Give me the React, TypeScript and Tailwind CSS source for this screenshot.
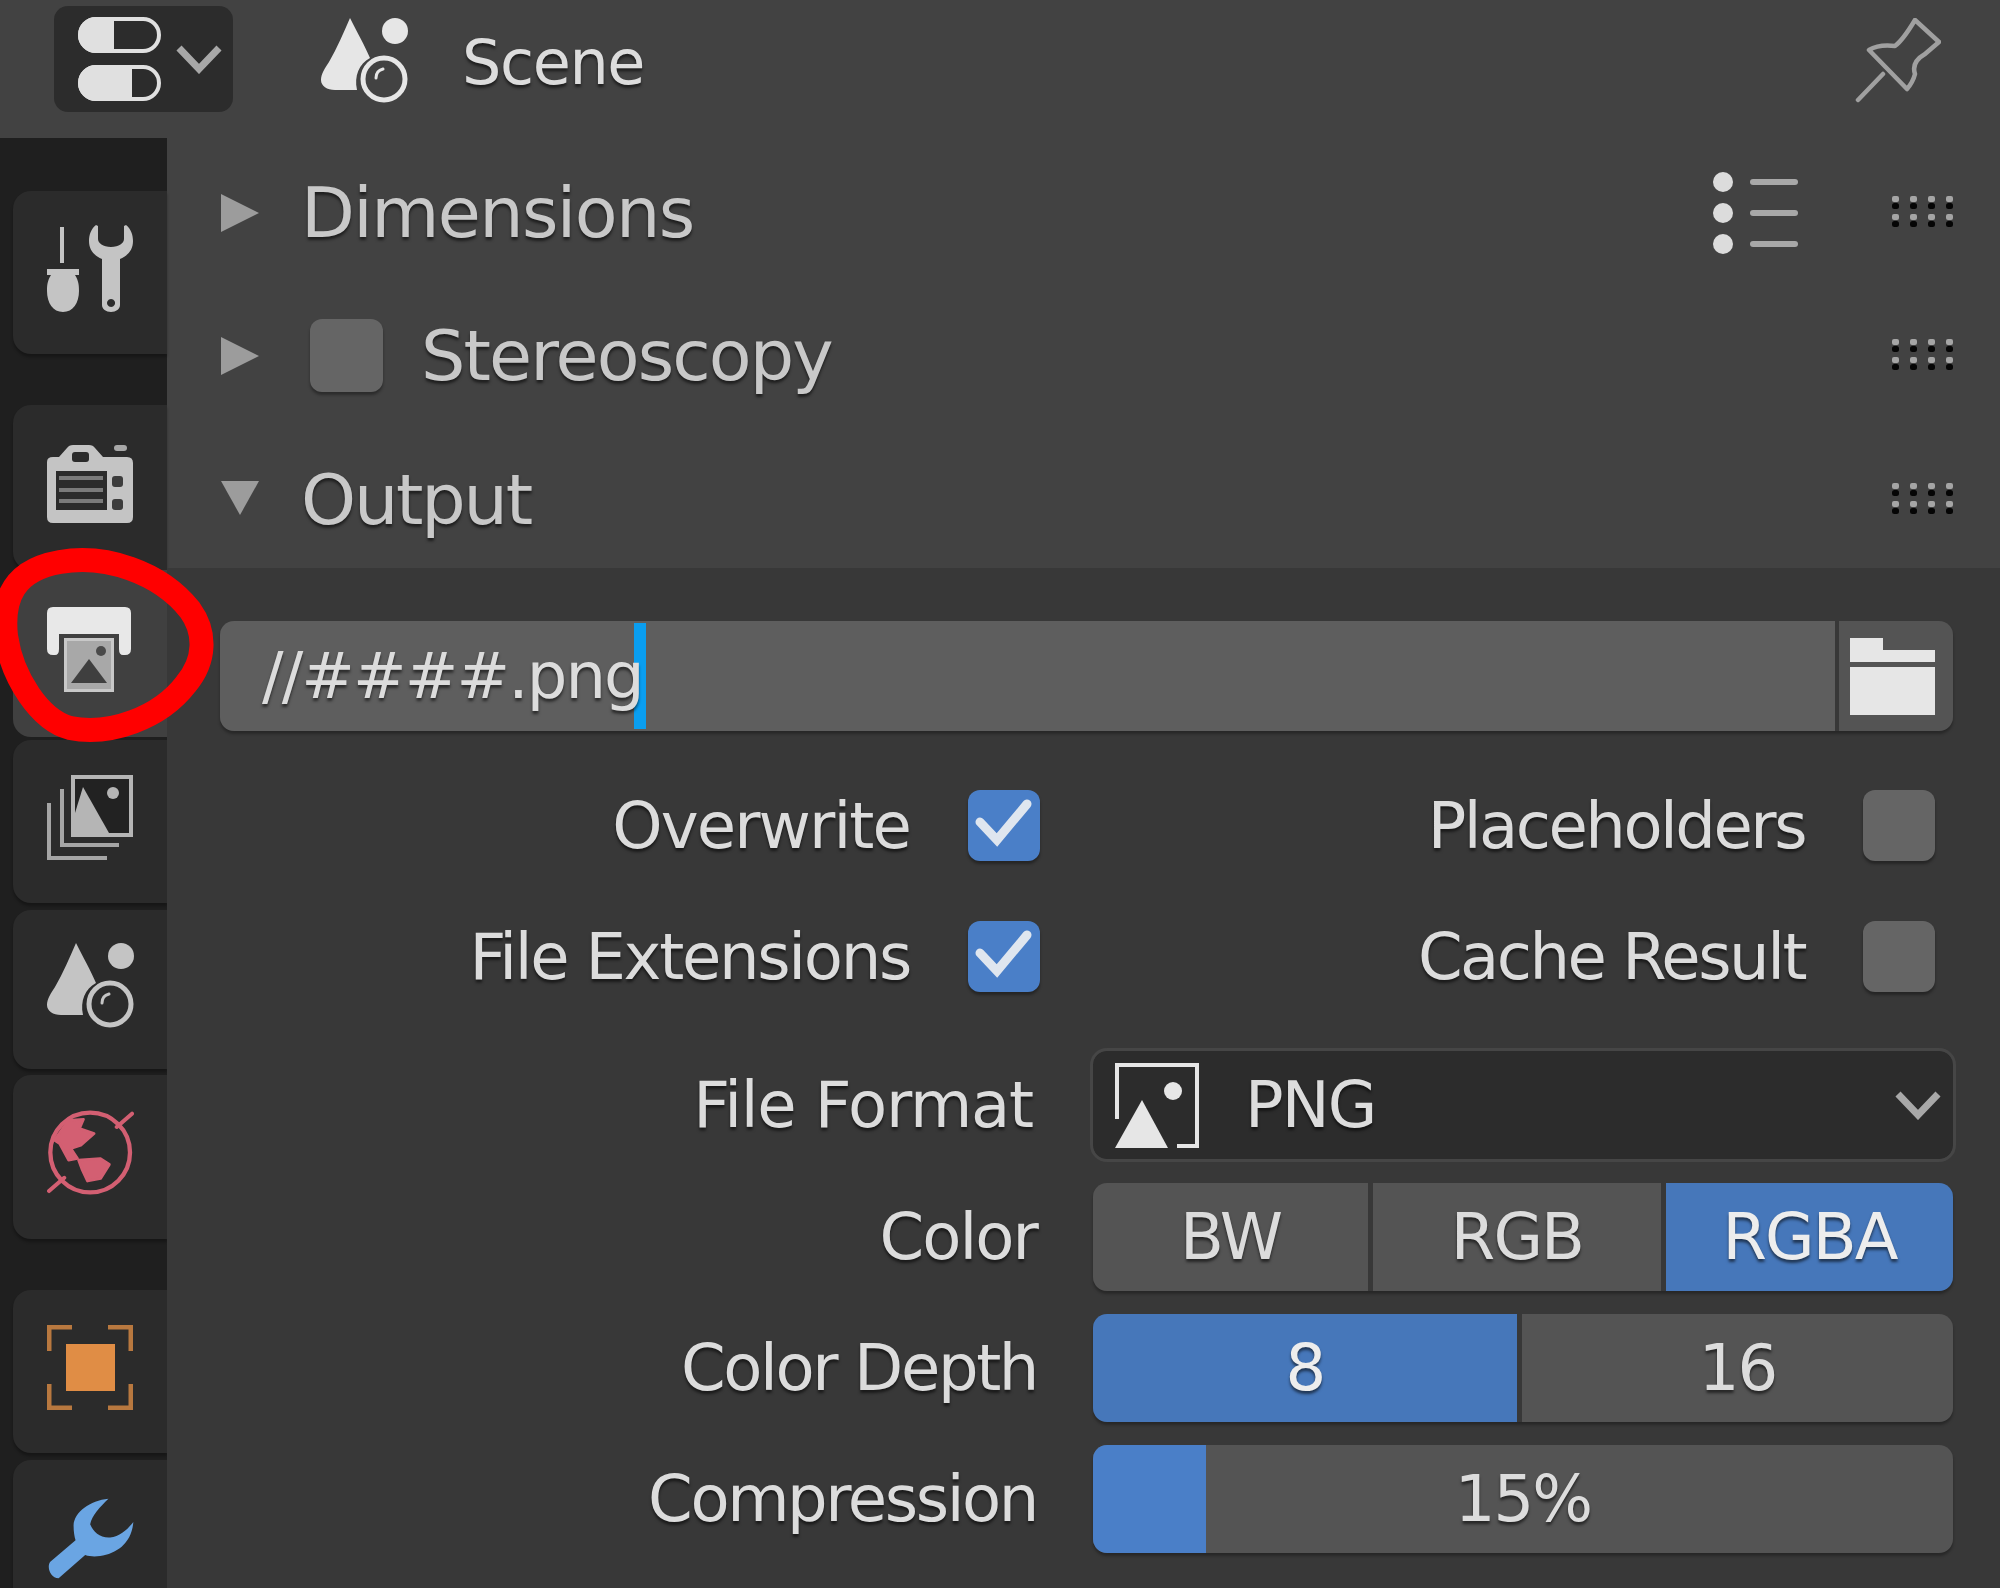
import type { ReactNode } from 'react';

const shadow = '[text-shadow:0_3px_3px_rgba(0,0,0,0.55)]';

function SceneIcon({ color, className }: { color: string; className: string }) {
    return (
        <svg viewBox="0 0 87 85" className={className} fill="none">
            <path d="M29 0 C36 14 44 28 49 40 C38 46 33 58 36 72 L14 72 C6 72 0 68 0 62 C0 56 4 50 8 44 C16 30 23 14 29 0 Z" fill={color} />
            <circle cx="74" cy="13" r="13" fill={color} />
            <circle cx="63" cy="61" r="21" stroke={color} strokeWidth="5" />
            <path d="M55 60 C55 55 58 52 62 51" stroke={color} strokeWidth="3" strokeLinecap="round" />
        </svg>
    );
}

function ToolIcon() {
    return (
        <svg viewBox="0 0 86 87" className="h-[87px] w-[86px]" fill="#c4c4c4">
            <rect x="13" y="2" width="4" height="36" />
            <path d="M0 44 H32 V50 H28 C32 56 32 62 32 66 C32 78 26 87 16 87 C6 87 0 78 0 66 C0 62 0 56 4 50 H0 Z" />
            <path fillRule="evenodd" d="M49 0 C44 4 42 10 42 16 C42 24 46 30 55 34 V80 C55 84 59 87 64 87 C69 87 73 84 73 80 V34 C82 30 86 24 86 16 C86 10 84 4 79 0 L77 1 V14 C77 18 72 22 64 22 C56 22 51 18 51 14 V1 Z M64 74 A4 4 0 1 0 64.1 74 Z" />
        </svg>
    );
}

function CameraIcon() {
    return (
        <svg viewBox="0 0 86 78" className="h-[78px] w-[86px]">
            <path fill="#c4c4c4" d="M0 17 Q0 12 6 12 H12 L20 3 Q22 0 26 0 H42 Q46 0 48 3 L56 12 H80 Q86 12 86 18 V72 Q86 78 80 78 H6 Q0 78 0 72 Z" />
            <rect x="25" y="7" width="17" height="10" rx="3" fill="#2b2b2b" />
            <rect x="9" y="26" width="51" height="39" fill="#2b2b2b" />
            <rect x="12" y="31" width="44" height="4" fill="#7a7a7a" />
            <rect x="12" y="43" width="44" height="4" fill="#7a7a7a" />
            <rect x="12" y="54" width="44" height="4" fill="#7a7a7a" />
            <rect x="65" y="31" width="11" height="11" rx="3" fill="#3c3c3c" />
            <rect x="65" y="54" width="11" height="11" rx="3" fill="#3c3c3c" />
            <rect x="67" y="0" width="13" height="6" rx="3" fill="#a8a8a8" />
        </svg>
    );
}

function RenderIcon() {
    return (
        <svg viewBox="0 0 84 85" className="h-[85px] w-[84px]">
            <path d="M6 0 H78 Q84 0 84 6 V42 Q84 48 78 48 H76 Q72 48 72 42 V27 H12 V42 Q12 48 8 48 H6 Q0 48 0 42 V6 Q0 0 6 0 Z" fill="#e8e8e8" />
            <rect x="17" y="31" width="50" height="54" fill="#c8c8c8" />
            <rect x="20" y="34" width="44" height="48" fill="#a8a8a8" />
            <path d="M24 76 L42 52 L60 76 Z" fill="#3f3f3f" />
            <circle cx="54" cy="44" r="5" fill="#4a4a4a" />
        </svg>
    );
}

function OutputIcon() {
    return (
        <svg viewBox="0 0 86 85" className="h-[85px] w-[86px]" fill="none">
            <rect x="26" y="2" width="58" height="58" fill="#222222" stroke="#b5b5b5" strokeWidth="4" />
            <path d="M28 38 L36 12 L62 58 H28 Z" fill="#b5b5b5" />
            <circle cx="66" cy="18" r="6" fill="#b5b5b5" />
            <path d="M15 14 V70 H72" stroke="#a5a5a5" strokeWidth="4" />
            <path d="M2 28 V83 H60" stroke="#a5a5a5" strokeWidth="4" />
        </svg>
    );
}

function WorldIcon() {
    return (
        <svg viewBox="140 200 262 250" className="h-[87px] w-[87px]" fill="none">
            <circle cx="270" cy="322" r="120" stroke="#d35f72" strokeWidth="13" />
            <path d="M350 245 L396 205 M146 438 L192 398" stroke="#d35f72" strokeWidth="12" strokeLinecap="round" />
            <path d="M205 225 L250 222 L238 250 L282 265 L242 300 L212 310 L232 340 L205 345 L178 295 L162 285 Z" fill="#d35f72" stroke="#d35f72" strokeWidth="8" strokeLinejoin="round" />
            <path d="M235 345 L300 340 L328 358 L302 400 L262 408 L245 372 Z" fill="#d35f72" stroke="#d35f72" strokeWidth="8" strokeLinejoin="round" />
        </svg>
    );
}

function ObjectIcon() {
    return (
        <svg viewBox="0 0 86 85" className="h-[85px] w-[86px]" fill="none">
            <rect x="19" y="19" width="49" height="47" fill="#e08d45" />
            <path d="M2 26 V2 H25 M61 2 H84 V26 M2 59 V83 H25 M84 59 V83 H61" stroke="#b8783f" strokeWidth="5" />
        </svg>
    );
}

function ModifierIcon() {
    return (
        <svg viewBox="140 1290 262 250" className="h-[87px] w-[87px]">
            <path d="M325 1295 C270 1300 222 1335 220 1375 C220 1395 223 1410 226 1420 L150 1485 C138 1500 150 1535 175 1535 L255 1465 C270 1470 285 1470 300 1468 C350 1460 395 1430 400 1365 C385 1385 360 1410 330 1412 C300 1414 280 1395 270 1372 C275 1345 300 1320 325 1295 Z" fill="#6aa5e3" />
        </svg>
    );
}

function Grip() {
    const columns = [0, 18, 36, 54];
    return (
        <svg viewBox="0 0 62 33" className="h-[33px] w-[62px]">
            {columns.map((x) => (
                <g key={x}>
                    <rect x={x} y="0" width="7" height="6" rx="2" fill="#a5a5a5" />
                    <rect x={x} y="7" width="7" height="6" rx="2.5" fill="#050505" />
                    <rect x={x} y="18" width="7" height="6" rx="2" fill="#a5a5a5" />
                    <rect x={x} y="25" width="7" height="6" rx="2.5" fill="#050505" />
                </g>
            ))}
        </svg>
    );
}

function PanelHeader({ open, className, extra, children }: { open?: boolean; className: string; extra?: ReactNode; children: ReactNode }) {
    return (
        <div className={`flex items-center pl-[54px] pr-[46px] ${className}`}>
            <svg viewBox="0 0 38 38" className="h-[38px] w-[38px] shrink-0" fill="#9c9c9c">
                {open ? <path d="M0 0 H38 L19 34 Z" /> : <path d="M0 0 L38 19 L0 38 Z" />}
            </svg>
            {children}
            <div className="ml-auto flex items-center gap-[94px]">
                {extra}
                <Grip />
            </div>
        </div>
    );
}

function CheckBox({ on }: { on?: boolean }) {
    return (
        <div className={`h-[71px] w-[72px] shrink-0 rounded-[12px] shadow-[0_3px_3px_rgba(0,0,0,0.35)] ${on ? 'bg-[#4a7fc8]' : 'bg-[#656565]'}`}>
            {on && (
                <svg viewBox="0 0 72 71" className="h-[71px] w-[72px]" fill="none">
                    <path d="M12 32 L29 50 L59 14" stroke="#dfe6ef" strokeWidth="9" strokeLinecap="round" />
                </svg>
            )}
        </div>
    );
}

function CheckCell({ label, on, className = '' }: { label: string; on?: boolean; className?: string }) {
    return (
        <div className="flex items-center justify-end gap-[58px]">
            <span className={`${shadow} ${className}`}>{label}</span>
            <CheckBox on={on} />
        </div>
    );
}

function FieldRow({ label, className, labelClass = '', children }: { label: string; className: string; labelClass?: string; children: ReactNode }) {
    return (
        <div className={`grid grid-cols-[873px_860px] ${className}`}>
            <div className={`flex items-center justify-end pr-[56px] ${shadow} ${labelClass}`}>{label}</div>
            {children}
        </div>
    );
}

function Segment({ className, active, children }: { className: string; active?: boolean; children: ReactNode }) {
    return (
        <div className={`flex h-[108px] items-center justify-center ${shadow} ${active ? 'bg-[#4677ba] text-[#ededed]' : 'bg-[#545454]'} ${className}`}>
            {children}
        </div>
    );
}

function Tab({ className, active, children }: { className: string; active?: boolean; children: ReactNode }) {
    return (
        <div className={`ml-[13px] flex items-center rounded-l-[18px] pb-[8px] pl-[34px] ${active ? 'bg-[#404040]' : 'bg-[#2b2b2b] shadow-[0_3px_3px_rgba(0,0,0,0.3)]'} ${className}`}>
            {children}
        </div>
    );
}

export default function App() {
    return (
        <div className="relative flex h-[1588px] w-[2000px] flex-col overflow-hidden bg-[#424242] font-['DejaVu_Sans',sans-serif] text-[64px] leading-none tracking-[-1.9px] text-[#dcdcdc]">
            {/* cabecalho */}
            <div className="flex h-[138px] shrink-0 items-start pl-[54px] pr-[59px]">
                <div className="mt-[6px] flex h-[106px] w-[179px] items-center gap-[15px] rounded-[14px] bg-[#2c2c2c] pl-[24px]">
                    <svg viewBox="0 0 83 84" className="h-[84px] w-[83px]" fill="none">
                        <rect x="2" y="2" width="79" height="32" rx="16" fill="#2c2c2c" stroke="#e0e0e0" strokeWidth="4" />
                        <path d="M18 0 H36 V36 H18 A18 18 0 0 1 18 0 Z" fill="#e0e0e0" />
                        <rect x="2" y="50" width="79" height="32" rx="16" fill="#2c2c2c" stroke="#e0e0e0" strokeWidth="4" />
                        <path d="M18 48 H54 V84 H18 A18 18 0 0 1 18 48 Z" fill="#e0e0e0" />
                    </svg>
                    <svg viewBox="0 0 46 30" className="h-[30px] w-[46px]" fill="none">
                        <path d="M3 4 L23 25 L43 4" stroke="#a8a8a8" strokeWidth="7" />
                    </svg>
                </div>
                <SceneIcon color="#e6e6e6" className="ml-[88px] mt-[18px] h-[85px] w-[87px]" />
                <span className={`ml-[54px] mt-[32px] text-[62px] tracking-[-1.4px] ${shadow}`}>Scene</span>
                <svg viewBox="0 0 86 85" className="ml-auto mt-[18px] h-[85px] w-[86px]" fill="none" stroke="#a0a0a0" strokeWidth="4.5" strokeLinejoin="round" strokeLinecap="round">
                    <path d="M60 2 L84 24 L70 36 Q56 44 60 56 Q58 64 52 71 L14 32 Q24 26 40 28 Q48 22 60 2 Z" />
                    <path d="M28 56 L3 82" />
                </svg>
            </div>

            <div className="flex flex-1">
                {/* abas laterais */}
                <div className="flex w-[167px] shrink-0 flex-col bg-[#1f1f1f] pt-[53px]">
                    <Tab className="h-[163px]">
                        <ToolIcon />
                    </Tab>
                    <Tab className="mt-[51px] h-[165px]">
                        <CameraIcon />
                    </Tab>
                    <Tab active className="h-[167px]">
                        <RenderIcon />
                    </Tab>
                    <Tab className="mt-[3px] h-[163px]">
                        <OutputIcon />
                    </Tab>
                    <Tab className="mt-[7px] h-[159px]">
                        <SceneIcon color="#c4c4c4" className="h-[85px] w-[87px]" />
                    </Tab>
                    <Tab className="mt-[6px] h-[164px]">
                        <WorldIcon />
                    </Tab>
                    <Tab className="mt-[51px] h-[163px]">
                        <ObjectIcon />
                    </Tab>
                    <Tab className="mt-[7px] h-[164px]">
                        <ModifierIcon />
                    </Tab>
                </div>

                <div className="flex flex-1 flex-col">
                    <div className="h-[430px] pt-[3px] text-[#c8c8c8]">
                        <PanelHeader
                            className="h-[143px]"
                            extra={
                                <svg viewBox="0 0 85 82" className="h-[82px] w-[85px]">
                                    <circle cx="10" cy="10" r="10" fill="#dcdcdc" />
                                    <circle cx="10" cy="41" r="10" fill="#dcdcdc" />
                                    <circle cx="10" cy="72" r="10" fill="#dcdcdc" />
                                    <rect x="37" y="7" width="48" height="6" rx="3" fill="#a8a8a8" />
                                    <rect x="37" y="38" width="48" height="6" rx="3" fill="#a8a8a8" />
                                    <rect x="37" y="69" width="48" height="6" rx="3" fill="#a8a8a8" />
                                </svg>
                            }
                        >
                            <span className={`ml-[42px] text-[70px] tracking-[-1.6px] ${shadow}`}>Dimensions</span>
                        </PanelHeader>
                        <PanelHeader className="h-[143px]">
                            <div className="ml-[51px] h-[73px] w-[73px] rounded-[12px] bg-[#656565] shadow-[0_3px_3px_rgba(0,0,0,0.35)]" />
                            <span className={`ml-[38px] text-[70px] tracking-[-1.9px] ${shadow}`}>Stereoscopy</span>
                        </PanelHeader>
                        <PanelHeader open className="h-[141px] pt-[4px]">
                            <span className={`ml-[42px] text-[70px] tracking-[-2.2px] ${shadow}`}>Output</span>
                        </PanelHeader>
                    </div>

                    {/* conteudo do painel */}
                    <div className="flex-1 bg-[#383838] pl-[53px] pr-[47px] pt-[53px]">
                        <div className="flex h-[110px] overflow-hidden rounded-[14px] shadow-[0_3px_3px_rgba(0,0,0,0.3)]">
                            <div className="flex flex-1 items-stretch bg-[#5e5e5e] pl-[42px]">
                                <span className={`relative z-10 self-center ${shadow}`}>//####.png</span>
                                <div className="-ml-[9px] my-[2px] w-[12px] bg-[#0a9ef0]" />
                            </div>
                            <div className="ml-[4px] flex w-[114px] items-center justify-center bg-[#545454] pr-[8px]">
                                <svg viewBox="0 0 85 77" className="h-[77px] w-[85px]" fill="#e6e6e6">
                                    <path d="M0 0 H33 V12 H85 V24 H0 Z" />
                                    <rect x="0" y="29" width="85" height="48" />
                                </svg>
                            </div>
                        </div>

                        <div className="mt-[59px] grid grid-cols-[820px_895px]">
                            <CheckCell label="Overwrite" on />
                            <CheckCell label="Placeholders" className="tracking-[-2.5px]" />
                        </div>
                        <div className="mt-[60px] grid grid-cols-[820px_895px]">
                            <CheckCell label="File Extensions" on className="tracking-[-2.3px]" />
                            <CheckCell label="Cache Result" className="tracking-[-2.5px]" />
                        </div>

                        <FieldRow label="File Format" className="mt-[59px]" labelClass="pr-[60px] tracking-[-1.2px]">
                            <div className="flex h-[108px] items-center rounded-[14px] bg-[#2c2c2c] pl-[22px] pr-[12px] outline-[3px] outline-[#464646]">
                                <svg viewBox="0 0 84 85" className="h-[85px] w-[84px]" fill="none">
                                    <path d="M2 56 V2 H82 V83 H62" stroke="#e6e6e6" strokeWidth="4" />
                                    <path d="M0 85 L27 37 L53 85 Z" fill="#e6e6e6" />
                                    <circle cx="58" cy="28" r="9" fill="#e6e6e6" />
                                </svg>
                                <span className={`ml-[46px] ${shadow}`}>PNG</span>
                                <svg viewBox="0 0 46 30" className="ml-auto h-[30px] w-[46px]" fill="none">
                                    <path d="M3 4 L23 25 L43 4" stroke="#a8a8a8" strokeWidth="7" />
                                </svg>
                            </div>
                        </FieldRow>

                        <FieldRow label="Color" className="mt-[24px]">
                            <div className="flex gap-[5px] overflow-hidden rounded-[14px] shadow-[0_3px_3px_rgba(0,0,0,0.3)]">
                                <Segment className="w-[275px]">BW</Segment>
                                <Segment className="w-[288px]">RGB</Segment>
                                <Segment active className="flex-1">RGBA</Segment>
                            </div>
                        </FieldRow>

                        <FieldRow label="Color Depth" className="mt-[23px]" labelClass="tracking-[-2.4px]">
                            <div className="flex gap-[5px] overflow-hidden rounded-[14px] shadow-[0_3px_3px_rgba(0,0,0,0.3)]">
                                <Segment active className="w-[424px]">8</Segment>
                                <Segment className="flex-1">16</Segment>
                            </div>
                        </FieldRow>

                        <FieldRow label="Compression" className="mt-[23px]" labelClass="tracking-[-2.4px]">
                            <div className="relative flex h-[108px] items-center justify-center overflow-hidden rounded-[14px] bg-[#545454] shadow-[0_3px_3px_rgba(0,0,0,0.3)]">
                                <div className="absolute inset-y-0 left-0 w-[113px] bg-[#4a7fc8]" />
                                <span className={`relative ${shadow}`}>15%</span>
                            </div>
                        </FieldRow>
                    </div>
                </div>
            </div>

            {/* marcacao vermelha por cima da aba */}
            <svg viewBox="0 0 220 200" className="absolute left-0 top-[548px] h-[200px] w-[220px]" fill="none">
                <path d="M6 88 C2 50 14 22 60 14 C105 6 160 24 190 62 C206 84 206 112 186 136 C160 170 110 188 70 180 C40 172 12 130 6 88 Z" stroke="#ff0000" strokeWidth="24" />
            </svg>
        </div>
    );
}
